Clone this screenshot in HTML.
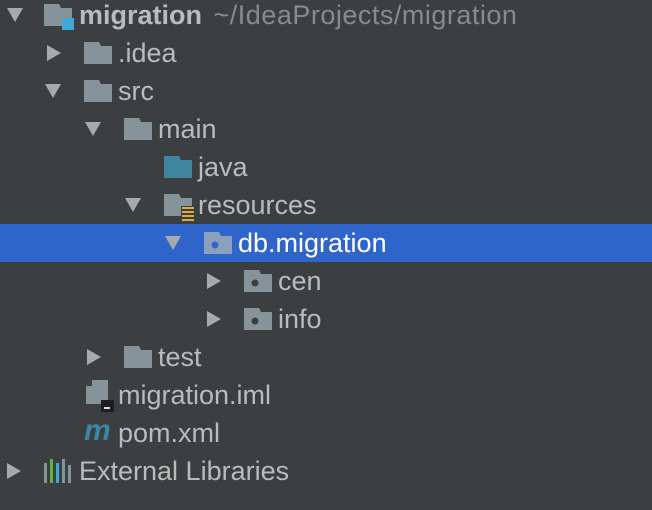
<!DOCTYPE html>
<html><head><meta charset="utf-8"><style>
html,body{margin:0;padding:0;}
body{width:652px;height:510px;background:#3c3f41;position:relative;overflow:hidden;font-family:"Liberation Sans",sans-serif;font-size:27px;color:#bbbbbb;}
.row{position:absolute;left:0;width:652px;height:38px;line-height:38px;}
.sel{background:#2f65ca;color:#fff;}
.arr{position:absolute;top:12px;width:0;height:0;}
.down{border-left:8px solid transparent;border-right:8px solid transparent;border-top:14px solid #a9a9a9;}
.right{top:11px;border-top:8px solid transparent;border-bottom:8px solid transparent;border-left:14px solid #a9a9a9;}
.ic{position:absolute;top:8px;}
.t{position:absolute;top:0;white-space:nowrap;}
</style></head><body>

<div class="row" style="top:-4px">
 <div class="arr down" style="left:7px"></div>
 <svg class="ic" style="left:44px" width="32" height="26" viewBox="0 0 32 26"><path d="M0 0H15L17 4H28V22H0Z" fill="#87939a"/><rect x="18" y="14" width="12" height="12" fill="#3ea8d8"/></svg>
 <div class="t" style="left:79px;font-weight:bold">migration <span style="font-weight:normal;color:#8a8a8a;margin-left:4px;letter-spacing:0.5px">~/IdeaProjects/migration</span></div>
</div>

<div class="row" style="top:34px">
 <div class="arr right" style="left:47px"></div>
 <svg class="ic" style="left:84px" width="28" height="22" viewBox="0 0 28 22"><path d="M0 0H15L17 4H28V22H0Z" fill="#87939a"/></svg>
 <div class="t" style="left:118px">.idea</div>
</div>

<div class="row" style="top:72px">
 <div class="arr down" style="left:45px"></div>
 <svg class="ic" style="left:84px" width="28" height="22" viewBox="0 0 28 22"><path d="M0 0H15L17 4H28V22H0Z" fill="#87939a"/></svg>
 <div class="t" style="left:118px">src</div>
</div>

<div class="row" style="top:110px">
 <div class="arr down" style="left:85px"></div>
 <svg class="ic" style="left:124px" width="28" height="22" viewBox="0 0 28 22"><path d="M0 0H15L17 4H28V22H0Z" fill="#87939a"/></svg>
 <div class="t" style="left:158px">main</div>
</div>

<div class="row" style="top:148px">
 <svg class="ic" style="left:164px" width="28" height="22" viewBox="0 0 28 22"><path d="M0 0H15L17 4H28V22H0Z" fill="#3e86a0"/></svg>
 <div class="t" style="left:198px">java</div>
</div>

<div class="row" style="top:186px">
 <div class="arr down" style="left:125px"></div>
 <svg class="ic" style="left:164px" width="30" height="28" viewBox="0 0 30 28"><path d="M0 0H15L17 4H28V22H0Z" fill="#87939a"/><rect x="17" y="12" width="13" height="16" fill="#3c3f41"/><rect x="18" y="13" width="12" height="2" fill="#e2a93a"/><rect x="18" y="17" width="12" height="2" fill="#e2a93a"/><rect x="18" y="21" width="12" height="2" fill="#e2a93a"/><rect x="18" y="25" width="12" height="2" fill="#e2a93a"/></svg>
 <div class="t" style="left:198px">resources</div>
</div>

<div class="row sel" style="top:224px">
 <div class="arr down" style="left:165px"></div>
 <svg class="ic" style="left:204px" width="28" height="22" viewBox="0 0 28 22"><path d="M0 0H15L17 4H28V22H0Z" fill="#8aa0bd"/><circle cx="11" cy="13" r="3.5" fill="#2f65ca"/></svg>
 <div class="t" style="left:238px">db.migration</div>
</div>

<div class="row" style="top:262px">
 <div class="arr right" style="left:207px"></div>
 <svg class="ic" style="left:244px" width="28" height="22" viewBox="0 0 28 22"><path d="M0 0H15L17 4H28V22H0Z" fill="#87939a"/><circle cx="11" cy="13" r="3.5" fill="#3c3f41"/></svg>
 <div class="t" style="left:278px">cen</div>
</div>

<div class="row" style="top:300px">
 <div class="arr right" style="left:207px"></div>
 <svg class="ic" style="left:244px" width="28" height="22" viewBox="0 0 28 22"><path d="M0 0H15L17 4H28V22H0Z" fill="#87939a"/><circle cx="11" cy="13" r="3.5" fill="#3c3f41"/></svg>
 <div class="t" style="left:278px">info</div>
</div>

<div class="row" style="top:338px">
 <div class="arr right" style="left:87px"></div>
 <svg class="ic" style="left:124px" width="28" height="22" viewBox="0 0 28 22"><path d="M0 0H15L17 4H28V22H0Z" fill="#87939a"/></svg>
 <div class="t" style="left:158px">test</div>
</div>

<div class="row" style="top:376px">
 <svg class="ic" style="left:86px;top:4px" width="30" height="32" viewBox="0 0 30 32"><path d="M6 0H22V24H0V6Z" fill="#87939a"/><path d="M0 6H6V0Z" fill="#3c3f41"/><rect x="15" y="20" width="13" height="12" fill="#1e1e1e"/><rect x="18" y="27" width="6" height="2" fill="#ddd"/></svg>
 <div class="t" style="left:118px">migration.iml</div>
</div>

<div class="row" style="top:414px">
 <div class="t" style="left:84px;font-style:italic;font-weight:bold;color:#3e86a0;font-size:30px;top:-2px">m</div>
 <div class="t" style="left:118px">pom.xml</div>
</div>

<div class="row" style="top:452px">
 <div class="arr right" style="left:7px"></div>
 <svg class="ic" style="left:44px;top:7px" width="28" height="24" viewBox="0 0 28 24"><rect x="0" y="4" width="3" height="20" fill="#87939a"/><rect x="6" y="0" width="3" height="24" fill="#5fb43a"/><rect x="12" y="4" width="3" height="20" fill="#3ea8d8"/><rect x="18" y="0" width="3" height="24" fill="#87939a"/><rect x="24" y="6" width="3" height="18" fill="#87939a"/></svg>
 <div class="t" style="left:79px">External Libraries</div>
</div>

</body></html>
